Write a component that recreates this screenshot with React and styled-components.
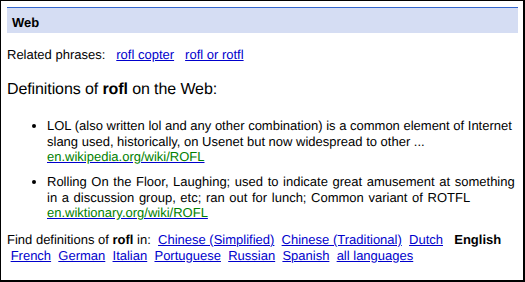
import React from "react";
import styled, { createGlobalStyle } from "styled-components";

const Global = createGlobalStyle`
  html, body { margin: 0; padding: 0; background: #fff; }
  body {
    font-family: "Liberation Sans", Arial, sans-serif;
    color: #000;
    text-rendering: geometricPrecision;
  }
`;

const Frame = styled.div`
  box-sizing: border-box;
  width: 525px;
  height: 282px;
  border-style: solid;
  border-color: #000;
  border-width: 1px 2px 2px 1px;
  padding: 6px 5px 0 6px;
  font-size: 13px;
  line-height: 15.5px;
  overflow: hidden;
`;

const Band = styled.div`
  border-top: 1px solid #3366cc;
  background: #d5ddf3;
  padding: 7px 5px 3px;
  line-height: 15px;
  font-weight: bold;
`;

const Related = styled.div`
  margin-top: 14px;
`;

const Link = styled.a`
  color: #0000cc;
  text-decoration: underline;
  margin-left: ${(p) => p.$gap || 0}px;
  cursor: pointer;
`;

const Heading = styled.h2`
  margin: 17.5px 0 0;
  font-size: 16px;
  line-height: 19px;
  font-weight: normal;
  letter-spacing: -0.1px;
`;

const List = styled.ul`
  margin: 19px 0 0;
  padding: 0 0 0 40px;
  list-style: disc;
`;

const Item = styled.li`
  word-spacing: ${(p) => p.$spread || 0}px;
  & + & { margin-top: 9.5px; }
`;

const Source = styled.a`
  color: #008000;
  text-decoration: underline;
  text-decoration-color: #0000cc;
`;

const Langs = styled.div`
  margin-top: 11.5px;
`;

const Current = styled.b`
  margin-left: 4px;
`;

const defs = [
  {
    text: "LOL (also written lol and any other combination) is a common element of Internet slang used, historically, on Usenet but now widespread to other ...",
    url: "en.wikipedia.org/wiki/ROFL",
    spread: 0,
  },
  {
    text: "Rolling On the Floor, Laughing; used to indicate great amusement at something in a discussion group, etc; ran out for lunch; Common variant of ROTFL",
    url: "en.wiktionary.org/wiki/ROFL",
    spread: 1,
  },
];

const before = ["Chinese (Simplified)", "Chinese (Traditional)", "Dutch"];
const after = ["French", "German", "Italian", "Portuguese", "Russian", "Spanish", "all languages"];

export default function App() {
  return (
    <>
      <Global />
      <Frame>
        <Band>Web</Band>
        <Related>
          Related phrases:
          <Link $gap={11}>rofl copter</Link>
          <Link $gap={11}>rofl or rotfl</Link>
        </Related>
        <Heading>
          Definitions of <b>rofl</b> on the Web:
        </Heading>
        <List>
          {defs.map((d) => (
            <Item key={d.url} $spread={d.spread}>
              {d.text}
              <br />
              <Source>{d.url}</Source>
            </Item>
          ))}
        </List>
        <Langs>
          Find definitions of <b>rofl</b> in:
          {before.map((l) => (
            <React.Fragment key={l}>
              {"\u00a0 "}
              <Link>{l}</Link>
            </React.Fragment>
          ))}
          {"\u00a0 "}
          <Current>English</Current>
          {after.map((l) => (
            <React.Fragment key={l}>
              {" \u00a0"}
              <Link>{l}</Link>
            </React.Fragment>
          ))}
        </Langs>
      </Frame>
    </>
  );
}
